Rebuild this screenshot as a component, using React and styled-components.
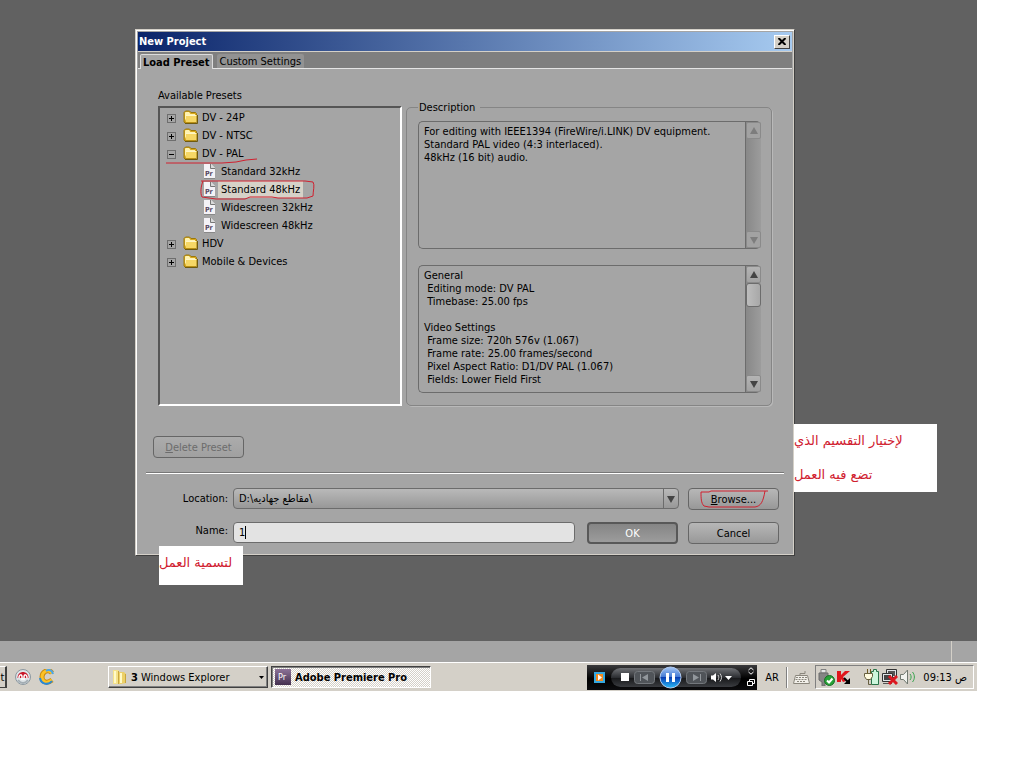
import { useState } from "react";
import styled, { createGlobalStyle, css } from "styled-components";

const color = {
   desk: "#616161",
   panel: "#a5a5a5",
   tabBar: "#7f7f7f",
   chrome: "#d4d0c8",
   line: "#6c6c6c",
   pen: "#d0202f",
};

const GlobalStyle = createGlobalStyle`
   * {
      box-sizing: border-box;
   }
   body {
      margin: 0;
      background: #fff;
      color: #000;
      font-family: "DejaVu Sans Condensed", "DejaVu Sans", Tahoma, sans-serif;
      font-size: 11px;
      line-height: 13px;
   }
   button, input, select, textarea {
      font: inherit;
      color: inherit;
      margin: 0;
   }
   svg {
      display: block;
      flex-shrink: 0;
   }
`;

const Screen = styled.div`
   margin-right: 47px;
   background: ${color.desk};
`;

const Workspace = styled.main`
   padding: 29px 182px 85px 135px;
`;

const Dialog = styled.section`
   position: relative;
   background: ${color.panel};
   border: 1px solid;
   border-color: #d4d0c8 #404040 #404040 #d4d0c8;
   box-shadow: inset 1px 1px 0 #fff, inset -1px -1px 0 ${color.chrome};
   padding: 2px 2px 11px 2px;
`;

const TitleBar = styled.header`
   display: flex;
   align-items: center;
   justify-content: space-between;
   height: 19px;
   padding: 0 2px 0 1px;
   background: linear-gradient(to right, #0a246a, #a6caf0);
   color: #fff;
`;

const Title = styled.h1`
   margin: 0;
   font-size: 11px;
   font-weight: 700;
`;

const CloseButton = styled.button`
   display: flex;
   align-items: center;
   justify-content: center;
   width: 16px;
   height: 14px;
   padding: 0;
   background: ${color.chrome};
   border: 1px solid;
   border-color: #fff #404040 #404040 #fff;
`;

const TabBar = styled.div`
   display: flex;
   align-items: flex-end;
   gap: 4px;
   height: 18px;
   padding: 0 2px;
   background: ${color.tabBar};
   border-top: 1px solid ${color.chrome};
   border-bottom: 1px solid #e4e4e4;
`;

const Tab = styled.button`
   height: 14px;
   padding: 0 3px;
   border: 0;
   border-radius: 2px 2px 0 0;
   background: #929292;
   line-height: 13px;
   white-space: nowrap;
   ${({ $active }) =>
      $active &&
      css`
         height: 15px;
         margin-bottom: -1px;
         padding: 0 2px;
         background: ${color.panel};
         border: 1px solid #dcdcdc;
         border-bottom: 0;
         font-weight: 700;
      `}
`;

const Presets = styled.div`
   display: grid;
   grid-template-columns: 2fr 3fr;
   gap: 4px;
   padding: 20px 20px 0;
`;

const PresetColumn = styled.div`
   display: flex;
   flex-direction: column;
   gap: 4px;
`;

const Tree = styled.ul`
   flex: 1;
   margin: 0;
   padding: 0 0 0 7px;
   list-style: none;
   border: 2px solid;
   border-color: #555 #fff #fff #555;
`;

const Branch = styled.ul`
   margin: 0;
   padding: 0 0 0 37px;
   list-style: none;
`;

const TreeRow = styled.div`
   position: relative;
   display: flex;
   align-items: center;
   height: 18px;
   white-space: nowrap;
`;

const Expander = styled.button`
   display: flex;
   align-items: center;
   justify-content: center;
   width: 9px;
   height: 9px;
   margin: 2px 7px 0 0;
   padding: 0;
   background: none;
   border: 1px solid #6e6e6e;
`;

const RowLabel = styled.span`
   padding: 2px 3px;
   margin-left: ${({ $leaf }) => ($leaf ? 3 : 0)}px;
   background: ${({ $selected }) => ($selected ? "#d6d2c8" : "transparent")};
`;

const Group = styled.fieldset`
   display: flex;
   flex-direction: column;
   gap: 16px;
   min-width: 0;
   margin: 12px 0 0;
   padding: 7px 10px 12px 11px;
   border: 1px solid #858585;
   border-radius: 5px;
   box-shadow: 1px 1px 0 #b9b9b9;
`;

const Legend = styled.legend`
   padding: 0 5px 0 1px;
`;

const InfoBox = styled.div`
   display: flex;
   height: 128px;
   border: 1px solid ${color.line};
   border-right: 0;
   border-radius: 5px;
`;

const InfoText = styled.textarea`
   flex: 1;
   min-width: 0;
   padding: 3px 5px 0;
   background: none;
   border: 0;
   outline: 0;
   resize: none;
   overflow: hidden;
   white-space: pre-wrap;
`;

const ScrollTrack = styled.div`
   display: flex;
   flex-direction: column;
   width: 16px;
   background: linear-gradient(to right, #888, #9c9c9c);
   border-left: 1px solid ${color.line};
`;

const ScrollButton = styled.button`
   display: flex;
   align-items: center;
   justify-content: center;
   height: 17px;
   padding: 0;
   border: 1px solid #8a8a8a;
   border-radius: 2px;
   background: linear-gradient(#b4b4b4, #a2a2a2);
   color: #444;
   &:last-child {
      margin-top: auto;
   }
   &:disabled {
      color: #7d7d7d;
      background: #a2a2a2;
   }
`;

const Thumb = styled.div`
   height: 24px;
   border: 1px solid ${color.line};
   border-radius: 3px;
   background: linear-gradient(to right, #bdbdbd, #a8a8a8);
`;

const PushButton = styled.button`
   position: relative;
   width: 91px;
   height: 22px;
   padding: 0;
   border: 1px solid #666;
   border-radius: 4px;
   background: linear-gradient(#b7b7b7, #989898);
   &:disabled {
      color: #6c6c6c;
      background: linear-gradient(#acacac, #a0a0a0);
   }
   ${({ $default }) =>
      $default &&
      css`
         border: 2px solid #585858;
         background: linear-gradient(#858585, #9c9c9c);
         color: #fff;
      `}
`;

const DeleteRow = styled.div`
   padding: 30px 15px 0;
`;

const Divider = styled.hr`
   margin: 14px 8px;
   border: 0;
   border-top: 1px solid #777;
   border-bottom: 1px solid #fff;
`;

const Form = styled.form`
   display: grid;
   grid-template-columns: 90px 1fr;
   gap: 12px 5px;
   padding: 0 13px 0 0;
`;

const FieldLabel = styled.label`
   text-align: right;
   line-height: ${({ $raised }) => ($raised ? 18 : 22)}px;
`;

const FieldRow = styled.div`
   display: flex;
   gap: ${({ $wide }) => ($wide ? 12 : 9)}px;
`;

const ButtonPair = styled.div`
   display: flex;
   gap: 10px;
`;

const SelectBox = styled.div`
   display: grid;
   grid-template-columns: 1fr 15px;
   flex: 1;
   height: 21px;
   border: 1px solid ${color.line};
   border-radius: 4px;
   background: linear-gradient(#b9b9b9, #989898);
`;

const Select = styled.select`
   grid-area: 1 / 1 / 2 / 3;
   appearance: none;
   padding: 0 5px;
   border: 0;
   outline: 0;
   background: none;
`;

const SelectArrow = styled.span`
   grid-area: 1 / 2;
   display: flex;
   align-items: center;
   justify-content: center;
   border-left: 1px solid ${color.line};
   color: #444;
   pointer-events: none;
`;

const InputBox = styled.div`
   display: flex;
   align-items: center;
   flex: 1;
   min-width: 0;
   height: 21px;
   padding: 0 5px;
   border: 1px solid ${color.line};
   border-radius: 4px;
   background: #e3e3e3;
`;

const TextInput = styled.input`
   field-sizing: content;
   max-width: 100%;
   padding: 0;
   border: 0;
   outline: 0;
   background: none;
   caret-color: transparent;
`;

const Cursor = styled.span`
   width: 1px;
   height: 13px;
   background: #000;
`;

const Note = styled.p`
   position: absolute;
   margin: 0;
   background: #fff;
   color: ${color.pen};
   font-family: "DejaVu Sans", sans-serif;
   font-size: 13px;
   line-height: 34px;
   text-align: left;
   white-space: nowrap;
`;

const BrowseNote = styled(Note)`
   left: 100%;
   top: 394px;
   width: 143px;
`;

const NameNote = styled(Note)`
   left: 23px;
   top: 516px;
   width: 84px;
   height: 39px;
`;

const PenMark = styled.svg`
   position: absolute;
   left: ${({ $x }) => $x}px;
   top: ${({ $y }) => $y}px;
   fill: none;
   stroke: ${color.pen};
   pointer-events: none;
`;

const StatusBar = styled.div`
   height: 21px;
   padding-right: 25px;
   background: ${color.panel};
   &:after {
      content: "";
      display: block;
      height: 100%;
      border-right: 1px solid ${color.chrome};
   }
`;

const Taskbar = styled.footer`
   display: flex;
   align-items: center;
   height: 29px;
   padding: 0 3px 0 0;
   background: ${color.chrome};
   border-top: 1px solid #fff;
   white-space: nowrap;
`;

const TaskEdge = styled.button`
   width: 7px;
   height: 22px;
   padding: 0;
   overflow: hidden;
   background: ${color.chrome};
   border: solid;
   border-width: 1px 2px 1px 0;
   border-color: #fff #404040 #404040 #fff;
   direction: rtl;
`;

const QuickLaunch = styled.nav`
   display: flex;
   gap: 8px;
   padding: 0 53px 0 8px;
`;

const IconButton = styled.button`
   display: flex;
   align-items: center;
   justify-content: center;
   padding: 0;
   border: 0;
   background: none;
`;

const TaskButton = styled.button`
   display: flex;
   align-items: center;
   gap: 4px;
   width: 160px;
   height: 22px;
   margin-right: 3px;
   padding: 0 3px;
   background: ${color.chrome};
   border: 1px solid;
   border-color: #fff #404040 #404040 #fff;
   box-shadow: inset -1px -1px 0 #808080;
   ${({ $active }) =>
      $active &&
      css`
         background: repeating-conic-gradient(#fff 0 25%, ${color.chrome} 0 50%) 0 0 / 2px 2px;
         border-color: #404040 #fff #fff #404040;
         box-shadow: inset 1px 1px 0 #808080;
         font-weight: 700;
      `}
`;

const Caret = styled.span`
   margin-left: auto;
`;

const Player = styled.div`
   display: flex;
   align-items: center;
   width: 170px;
   height: 25px;
   margin-left: auto;
   padding: 0 2px 0 7px;
   background: linear-gradient(#3a3a3c, #000 55%, #0c0c0e);
`;

const PlayerDeck = styled.div`
   display: flex;
   align-items: center;
   justify-content: space-between;
   flex: 1;
   height: 19px;
   margin: 0 6px;
   padding: 0 9px 0 10px;
   border-radius: 10px;
   background: linear-gradient(#707276, #2c2e32 50%, #17181a 52%, #3a3c40);
`;

const Language = styled.span`
   padding: 0 7px 0 8px;
`;

const TrayDivider = styled.span`
   height: 21px;
   margin-right: 5px;
   border-left: 1px solid #808080;
   border-right: 1px solid #fff;
`;

const Tray = styled.div`
   display: flex;
   align-items: center;
   gap: 2px;
   width: 159px;
   height: 24px;
   margin-left: 5px;
   padding: 0 6px 0 2px;
   border: 1px solid;
   border-color: #808080 #fff #fff #808080;
`;

const TrayGap = styled.span`
   flex: 1;
`;

const Clock = styled.time`
   margin-left: 5px;
`;

const FolderIcon = () => (
   <svg width="16" height="14" viewBox="0 0 16 14">
      <path d="M1 2.500 2.500 1h4L8 2.500h4.500l1 1V12l-1 1H2l-1-1z" fill="#d9a81c" stroke="#9a780c" />
      <path d="M2 2.500 3 2h3l1.500 2H12v2H4L2 11z" fill="#fff3b0" />
      <path d="M3 5.500h10.500V12H3z" fill="#f6d765" />
      <path d="M3 5.500h10.500" stroke="#fff6c4" />
      <path d="M2 13.500h12.500V5" fill="none" stroke="#6f5a10" />
   </svg>
);

const PresetIcon = () => (
   <svg width="11" height="15" viewBox="0 0 11 15">
      <path d="M0 0h7l4 4v11H0z" fill="#f4f2f6" />
      <path d="M6.500 0v4.500H11" fill="#d8d8d8" stroke="#777" />
      <path d="M0 14.500h11" stroke="#888" />
      <text x="1" y="12" fontSize="7" fontWeight="700" fill="#574862">Pr</text>
   </svg>
);

const Triangle = ({ down }) => (
   <svg width="8" height="8" viewBox="0 0 8 8">
      <path d={down ? "M0 1h8L4 8z" : "M0 7h8L4 0z"} fill="currentColor" />
   </svg>
);

const OrbIcon = () => (
   <svg width="16" height="16" viewBox="0 0 16 16">
      <circle cx="8" cy="8" r="7.500" fill="#dfe5e8" stroke="#8b979f" />
      <path d="M2.500 9c0-8 11-8 11 0z" fill="#c9182a" />
      <path d="M4 9c0-4 3-4 3-1v3M9 11V8c0-3 3-3 3 1" fill="none" stroke="#fff" strokeWidth="1.500" />
      <path d="M3 11c3 4 7 4 10 0" fill="none" stroke="#a3adb3" strokeWidth="2" />
   </svg>
);

const SwirlIcon = () => (
   <svg width="16" height="16" viewBox="0 0 16 16" fill="none">
      <path d="M13 4C9-1 3 3 3 8s5 7 10 3" stroke="#c98a10" strokeWidth="5" />
      <path d="M13 4C9-1 3 3 3 8s5 7 10 3" stroke="#fcc226" strokeWidth="3" />
      <path d="M1 9c1 6 8 8 12 3" stroke="#2889d8" strokeWidth="2" />
      <path d="M7 2c3-2 6-1 7 3" stroke="#4aa6e8" strokeWidth="2" />
   </svg>
);

const ExplorerIcon = () => (
   <svg width="15" height="16" viewBox="0 0 15 16">
      <path d="M1 1h5l1 1v12l-2 1H1z" fill="#f5e28a" />
      <path d="M7 3h5l2 2v9l-5 1H7z" fill="#ecd068" />
      <path d="M3 2v12M9 4v10" stroke="#fffac8" strokeWidth="2" />
      <path d="M6.500 2v13M13.500 5v9" stroke="#c9a63c" />
   </svg>
);

const PremiereIcon = () => (
   <svg width="16" height="16" viewBox="0 0 16 16">
      <defs>
         <linearGradient id="premiere" x2="0" y2="1">
            <stop stopColor="#8d7398" />
            <stop offset="1" stopColor="#44304f" />
         </linearGradient>
      </defs>
      <path d="M0 0h16v16H0z" fill="url(#premiere)" />
      <text x="3" y="11" fontSize="9" fontWeight="400" fill="#fff">Pr</text>
   </svg>
);

const MediaIcon = () => (
   <svg width="11" height="11" viewBox="0 0 11 11">
      <path d="M0 0h11v11H0z" fill="#35a8df" />
      <path d="M2 2h7v7H2z" fill="#f58a1c" />
      <path d="M4 2.500 8 5.500 4 8.500z" fill="#fff" />
   </svg>
);

const SkipIcon = ({ next }) => (
   <svg width="21" height="13" viewBox="0 0 21 13">
      <rect x=".5" y=".5" width="20" height="12" rx="3" fill="#505459" stroke="#74787d" />
      <path
         d={next ? "M7 3l6 3.500L7 10zM14 3h1v7h-1z" : "M14 3l-6 3.500 6 3.500zM6 3h1v7H6z"}
         fill="#92979c"
      />
   </svg>
);

const PauseIcon = () => (
   <svg width="23" height="23" viewBox="0 0 23 23">
      <defs>
         <linearGradient id="pause" x2="0" y2="1">
            <stop stopColor="#a8c8f4" />
            <stop offset=".48" stopColor="#4279d4" />
            <stop offset=".5" stopColor="#0b3eb2" />
            <stop offset="1" stopColor="#28bdfa" />
         </linearGradient>
      </defs>
      <circle cx="11.500" cy="11.500" r="10.500" fill="url(#pause)" stroke="#b4cdf2" />
      <path d="M7 7h3v9H7zM13 7h3v9h-3z" fill="#fff" />
   </svg>
);

const VolumeIcon = () => (
   <svg width="21" height="11" viewBox="0 0 21 11">
      <path d="M0 3.500h2L5 1v9L2 7.500H0z" fill="#fff" />
      <path d="M7 3c1 2 1 3 0 5M9 1.500c2 3 2 5 0 8" fill="none" stroke="#d0d0d0" />
      <path d="M14 4h7l-3.500 4z" fill="#fff" />
   </svg>
);

const PlayerCorner = () => (
   <svg width="8" height="20" viewBox="0 0 8 20" fill="none" stroke="#fff">
      <path d="M1.500 3 4 .8 6.500 3M1.500 5 4 7.200 6.500 5" />
      <path d="M2.500 14v-1.500h5v4H6M.5 14.500h5v4h-5z" />
   </svg>
);

const KeyboardIcon = () => (
   <svg width="17" height="15" viewBox="0 0 17 15" fill="none" stroke="#8a867c">
      <path d="M7 5.500V3.500h5V1" />
      <path d="M2.500 5.500h12l2 8H.5z" fill="#f1efe9" />
      <path d="M3 7.500h11M2.500 9.500h12M4 11.500h9" strokeDasharray="2 1" />
   </svg>
);

const UsbIcon = () => (
   <svg width="17" height="17" viewBox="0 0 17 17">
      <path d="M3 .5h5V4H3z" fill="#e7e7e7" stroke="#808080" />
      <path d="M1 4h9v7l-3 2v4H4v-4l-3-2z" fill="#858585" stroke="#6c6c6c" />
      <circle cx="11.500" cy="11.500" r="5" fill="#28a237" stroke="#187025" />
      <path d="m9 11.500 2 2 3.500-4" fill="none" stroke="#fff" strokeWidth="2" />
   </svg>
);

const ShieldIcon = () => (
   <svg width="15" height="15" viewBox="0 0 15 15">
      <path d="M0 1h4v4l4-4h5L6 7l3 4-3 1-2-3v3H0z" fill="#e0151b" />
      <path d="m7 8 5 5" fill="none" stroke="#000" strokeWidth="2" />
      <path d="M13 8v6H7z" />
   </svg>
);

const PowerIcon = () => (
   <svg width="16" height="16" viewBox="0 0 16 16">
      <path d="M7.500 2.500h2v-2h3v2h2v13h-7z" fill="#cdf5dc" stroke="#287349" />
      <path d="M3.500 0v4M6.500 0v4" stroke="#6d5b20" />
      <path d="M.5 4.500h8v3l-2 3h-4l-2-3z" fill="#fffbe0" stroke="#665f40" />
      <path d="M4.500 10v5.500h3" fill="none" stroke="#665f40" />
   </svg>
);

const NetworkIcon = () => (
   <svg width="16" height="16" viewBox="0 0 16 16">
      <path d="M4.500 .5h10v8h-10z" fill="#dfe3e6" stroke="#333" />
      <path d="M6 2h7v5H6z" fill="#555" />
      <path d="M.5 4.500h10v8H.5z" fill="#dfe3e6" stroke="#333" />
      <path d="M2 6h7v5H2z" fill="#444" />
      <path d="M1 14.500h9" stroke="#555" />
      <path d="m7 7 8 8M15 7l-8 8" stroke="#dc1820" strokeWidth="3" />
   </svg>
);

const SpeakerIcon = () => (
   <svg width="16" height="16" viewBox="0 0 16 16">
      <path d="M.5 5.500h3l4-4.500v14l-4-4.500h-3z" fill="#f1f3ef" stroke="#707870" />
      <path d="M10 5c1.500 2 1.500 4 0 6M12.500 3c2.500 3 2.500 7 0 10" fill="none" stroke="#35a34b" />
   </svg>
);

const folders = [
   { name: "DV - 24P" },
   { name: "DV - NTSC" },
   {
      name: "DV - PAL",
      presets: ["Standard 32kHz", "Standard 48kHz", "Widescreen 32kHz", "Widescreen 48kHz"],
   },
   { name: "HDV" },
   { name: "Mobile & Devices" },
];

const description = `For editing with IEEE1394 (FireWire/i.LINK) DV equipment.
Standard PAL video (4:3 interlaced).
48kHz (16 bit) audio.`;

const settings = `General
 Editing mode: DV PAL
 Timebase: 25.00 fps

Video Settings
 Frame size: 720h 576v (1.067)
 Frame rate: 25.00 frames/second
 Pixel Aspect Ratio: D1/DV PAL (1.067)
 Fields: Lower Field First`;

const Info = ({ label, text, scrollable }) => (
   <InfoBox>
      <InfoText aria-label={label} readOnly value={text} />
      <ScrollTrack>
         <ScrollButton type="button" aria-label="Scroll up" disabled={!scrollable}>
            <Triangle />
         </ScrollButton>
         {scrollable && <Thumb />}
         <ScrollButton type="button" aria-label="Scroll down" disabled={!scrollable}>
            <Triangle down />
         </ScrollButton>
      </ScrollTrack>
   </InfoBox>
);

const PresetTree = () => {
   const [selected, setSelected] = useState("Standard 48kHz");
   return (
      <Tree aria-label="Available Presets">
         {folders.map(({ name, presets }) => (
            <li key={name}>
               <TreeRow>
                  <Expander type="button" aria-label={name} aria-expanded={!!presets}>
                     <svg width="5" height="5" viewBox="0 0 5 5">
                        <path d={presets ? "M0 2h5v1H0z" : "M0 2h2V0h1v2h2v1H3v2H2V3H0z"} />
                     </svg>
                  </Expander>
                  <FolderIcon />
                  <RowLabel>{name}</RowLabel>
                  {presets && (
                     <PenMark $x={-1} $y={14} width="92" height="6">
                        <path d="M0 5h56l14-1 10-2 11-1" />
                     </PenMark>
                  )}
               </TreeRow>
               {presets && (
                  <Branch>
                     {presets.map((preset) => (
                        <TreeRow key={preset} onClick={() => setSelected(preset)}>
                           <PresetIcon />
                           <RowLabel $leaf $selected={preset === selected}>
                              {preset}
                           </RowLabel>
                           {preset === "Standard 48kHz" && (
                              <PenMark $x={-4} $y={-1} width="117" height="21">
                                 <path d="M1 2h104l8 1c2 3 0 9 0 14l-6 2H78l-6-1H50l-5 2H16L2 18C0 14 1 7 3 2" />
                              </PenMark>
                           )}
                        </TreeRow>
                     ))}
                  </Branch>
               )}
            </li>
         ))}
      </Tree>
   );
};

const NewProject = () => {
   const [name, setName] = useState("1");
   return (
      <Dialog role="dialog" aria-labelledby="dialog-title">
         <TitleBar>
            <Title id="dialog-title">New Project</Title>
            <CloseButton type="button" aria-label="Close">
               <svg width="8" height="7" viewBox="0 0 8 7">
                  <path d="m.5 0 7 7M7.500 0l-7 7" stroke="#000" strokeWidth="2" />
               </svg>
            </CloseButton>
         </TitleBar>
         <TabBar role="tablist">
            <Tab type="button" role="tab" aria-selected="true" $active>Load Preset</Tab>
            <Tab type="button" role="tab" aria-selected="false">Custom Settings</Tab>
         </TabBar>
         <Presets>
            <PresetColumn>
               <span>Available Presets</span>
               <PresetTree />
            </PresetColumn>
            <Group>
               <Legend>Description</Legend>
               <Info label="Description" text={description} />
               <Info label="Settings" text={settings} scrollable />
            </Group>
         </Presets>
         <DeleteRow>
            <PushButton type="button" disabled><u>D</u>elete Preset</PushButton>
         </DeleteRow>
         <Divider />
         <Form onSubmit={(e) => e.preventDefault()}>
            <FieldLabel htmlFor="location">Location:</FieldLabel>
            <FieldRow>
               <SelectBox>
                  <Select id="location">
                     <option>{"D:\\مقاطع جهاديه\\"}</option>
                  </Select>
                  <SelectArrow><Triangle down /></SelectArrow>
               </SelectBox>
               <PushButton type="button">
                  <u>B</u>rowse...
                  <PenMark $x={11} $y={0} width="70" height="20">
                     <path d="M1 3h8l2-1h57M1 3c0 6 0 11 3 14l5 1h46c6-1 8-5 10-16" />
                  </PenMark>
               </PushButton>
            </FieldRow>
            <FieldLabel htmlFor="name" $raised>Name:</FieldLabel>
            <FieldRow $wide>
               <InputBox>
                  <TextInput id="name" value={name} onChange={(e) => setName(e.target.value)} />
                  <Cursor />
               </InputBox>
               <ButtonPair>
                  <PushButton type="submit" $default>OK</PushButton>
                  <PushButton type="button">Cancel</PushButton>
               </ButtonPair>
            </FieldRow>
         </Form>
         <BrowseNote dir="rtl" lang="ar">
            لإختيار التقسيم الذي
            <br />
            تضع فيه العمل
         </BrowseNote>
         <NameNote dir="rtl" lang="ar">لتسمية العمل</NameNote>
      </Dialog>
   );
};

const MediaPlayer = () => (
   <Player>
      <IconButton type="button" aria-label="Media Player"><MediaIcon /></IconButton>
      <PlayerDeck>
         <IconButton type="button" aria-label="Stop">
            <svg width="8" height="8" viewBox="0 0 8 8"><path d="M0 0h8v8H0z" fill="#fff" /></svg>
         </IconButton>
         <IconButton type="button" aria-label="Previous"><SkipIcon /></IconButton>
         <IconButton type="button" aria-label="Pause"><PauseIcon /></IconButton>
         <IconButton type="button" aria-label="Next"><SkipIcon next /></IconButton>
         <IconButton type="button" aria-label="Volume"><VolumeIcon /></IconButton>
      </PlayerDeck>
      <PlayerCorner />
   </Player>
);

const App = () => (
   <Screen>
      <GlobalStyle />
      <Workspace>
         <NewProject />
      </Workspace>
      <StatusBar />
      <Taskbar>
         <TaskEdge type="button">t</TaskEdge>
         <QuickLaunch>
            <IconButton type="button" aria-label="Download manager"><OrbIcon /></IconButton>
            <IconButton type="button" aria-label="Browser"><SwirlIcon /></IconButton>
         </QuickLaunch>
         <TaskButton type="button">
            <ExplorerIcon />
            <span><b>3</b> Windows Explorer</span>
            <Caret>
               <svg width="5" height="3" viewBox="0 0 5 3"><path d="M0 0h5L2.500 3z" /></svg>
            </Caret>
         </TaskButton>
         <TaskButton type="button" $active>
            <PremiereIcon />
            <span>Adobe Premiere Pro</span>
         </TaskButton>
         <MediaPlayer />
         <Language>AR</Language>
         <TrayDivider />
         <KeyboardIcon />
         <Tray>
            <UsbIcon />
            <ShieldIcon />
            <TrayGap />
            <PowerIcon />
            <NetworkIcon />
            <SpeakerIcon />
            <Clock dir="ltr">09:13 ص</Clock>
         </Tray>
      </Taskbar>
   </Screen>
);

export default App;
